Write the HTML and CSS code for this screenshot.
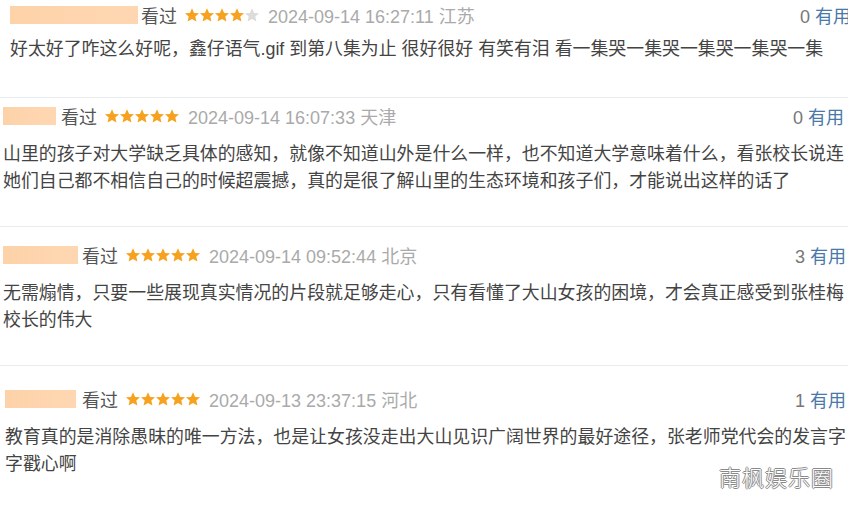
FILE: index.html
```html
<!DOCTYPE html>
<html lang="zh-CN">
<head>
<meta charset="UTF-8" />
<title>短评</title>
<link rel="stylesheet" href="styles.css">
</head>
<body>
  <svg width="0" height="0" style="position:absolute" aria-hidden="true">
    <defs>
      <polygon id="star" points="7,0.2 9.1,4.9 14,5.3 10.3,8.6 11.4,13.6 7,11 2.6,13.6 3.7,8.6 0,5.3 4.9,4.9" />
    </defs>
  </svg>

  <div class="comments">
    <!-- 1 -->
    <div class="comment comment--first">
      <div class="comment-head">
        <span class="user user--w128"></span>
        <span class="watched">看过</span>
        <svg class="stars" viewBox="0 0 74 14" aria-label="4星">
          <use href="#star" x="0" class="on" />
          <use href="#star" x="15" class="on" />
          <use href="#star" x="30" class="on" />
          <use href="#star" x="45" class="on" />
          <use href="#star" x="60" class="off" />
        </svg>
        <span class="time">2024-09-14 16:27:11 江苏</span>
        <span class="votes"><span class="vote-count">0</span> <a class="vote-link">有用</a></span>
      </div>
      <p class="comment-text comment-text--tight">好太好了咋这么好呢，鑫仔语气.gif 到第八集为止 很好很好 有笑有泪 看一集哭一集哭一集哭一集哭一集</p>
    </div>

    <!-- 2 -->
    <div class="comment comment--second">
      <div class="comment-head">
        <span class="user user--w53"></span>
        <span class="watched">看过</span>
        <svg class="stars" viewBox="0 0 74 14" aria-label="5星">
          <use href="#star" x="0" class="on" />
          <use href="#star" x="15" class="on" />
          <use href="#star" x="30" class="on" />
          <use href="#star" x="45" class="on" />
          <use href="#star" x="60" class="on" />
        </svg>
        <span class="time">2024-09-14 16:07:33 天津</span>
        <span class="votes"><span class="vote-count">0</span> <a class="vote-link">有用</a></span>
      </div>
      <p class="comment-text">山里的孩子对大学缺乏具体的感知，就像不知道山外是什么一样，也不知道大学意味着什么，看张校长说连她们自己都不相信自己的时候超震撼，真的是很了解山里的生态环境和孩子们，才能说出这样的话了</p>
    </div>

    <!-- 3 -->
    <div class="comment comment--third">
      <div class="comment-head">
        <span class="user user--w75"></span>
        <span class="watched">看过</span>
        <svg class="stars" viewBox="0 0 74 14" aria-label="5星">
          <use href="#star" x="0" class="on" />
          <use href="#star" x="15" class="on" />
          <use href="#star" x="30" class="on" />
          <use href="#star" x="45" class="on" />
          <use href="#star" x="60" class="on" />
        </svg>
        <span class="time">2024-09-14 09:52:44 北京</span>
        <span class="votes"><span class="vote-count">3</span> <a class="vote-link">有用</a></span>
      </div>
      <p class="comment-text">无需煽情，只要一些展现真实情况的片段就足够走心，只有看懂了大山女孩的困境，才会真正感受到张桂梅校长的伟大</p>
    </div>

    <!-- 4 -->
    <div class="comment comment--fourth">
      <div class="comment-head">
        <span class="user user--w71"></span>
        <span class="watched">看过</span>
        <svg class="stars" viewBox="0 0 74 14" aria-label="5星">
          <use href="#star" x="0" class="on" />
          <use href="#star" x="15" class="on" />
          <use href="#star" x="30" class="on" />
          <use href="#star" x="45" class="on" />
          <use href="#star" x="60" class="on" />
        </svg>
        <span class="time">2024-09-13 23:37:15 河北</span>
        <span class="votes"><span class="vote-count">1</span> <a class="vote-link">有用</a></span>
      </div>
      <p class="comment-text">教育真的是消除愚昧的唯一方法，也是让女孩没走出大山见识广阔世界的最好途径，张老师党代会的发言字字戳心啊</p>
    </div>
  </div>

  <div class="watermark">南枫娱乐圈</div>
</body>
</html>
```

FILE: styles.css
```css
body {
  margin: 0;
  width: 848px;
  height: 507px;
  overflow: hidden;
  background: #fff;
  font-family: "Liberation Sans", "Noto Sans CJK SC", sans-serif;
  color: #494949;
  position: relative;
}

.comment {
  padding: 6px 0 31px 3px;
  border-bottom: 1px solid #e9ecee;
}

.comment:last-child {
  border-bottom: none;
}

.comment--first {
  padding: 3px 0 34px 10px;
}

.comment--first .votes {
  margin-right: -3px;
}

.comment--second .votes {
  margin-right: 4px;
}

.comment--third {
  padding-top: 16px;
  padding-left: 3px;
}

.comment--fourth {
  padding-top: 21px;
  padding-left: 5px;
}

.comment-head {
  display: flex;
  align-items: center;
  height: 24px;
  font-size: 18px;
  white-space: nowrap;
}

.user {
  display: inline-block;
  height: 18px;
  background: linear-gradient(90deg, #fdd2a9, #fed7b2);
  margin-right: 4px;
}

.user--w128 { width: 128px; margin-right: 3px; }
.user--w53 { width: 53px; margin-right: 5px; }
.user--w75 { width: 75px; }
.user--w71 { width: 71px; margin-right: 6px; }

.watched {
  color: #555;
}

.stars {
  width: 74px;
  height: 14px;
  margin: 0 9px 0 8px;
}

.stars .on { fill: #f6a21e; }
.stars .off { fill: #dcdcdc; }

.time {
  color: #aaa;
}

.votes {
  margin-left: auto;
  margin-right: 2px;
}

.vote-count {
  color: #777;
}

.vote-link {
  color: #4a78a8;
}

.comment-text {
  margin: 13px 0 0;
  font-size: 17.9px;
  line-height: 27px;
  color: #444;
}

.comment-text--tight {
  margin-top: 9px;
}

.watermark {
  position: absolute;
  right: 14px;
  bottom: 15px;
  font-family: "Noto Sans CJK SC", sans-serif;
  font-size: 22px;
  font-weight: 300;
  color: #fff;
  letter-spacing: 1px;
  text-shadow:
    1px 0 0 #8a8a8a,
    -1px 0 0 #8a8a8a,
    0 1px 0 #8a8a8a,
    0 -1px 0 #8a8a8a;
}
```
